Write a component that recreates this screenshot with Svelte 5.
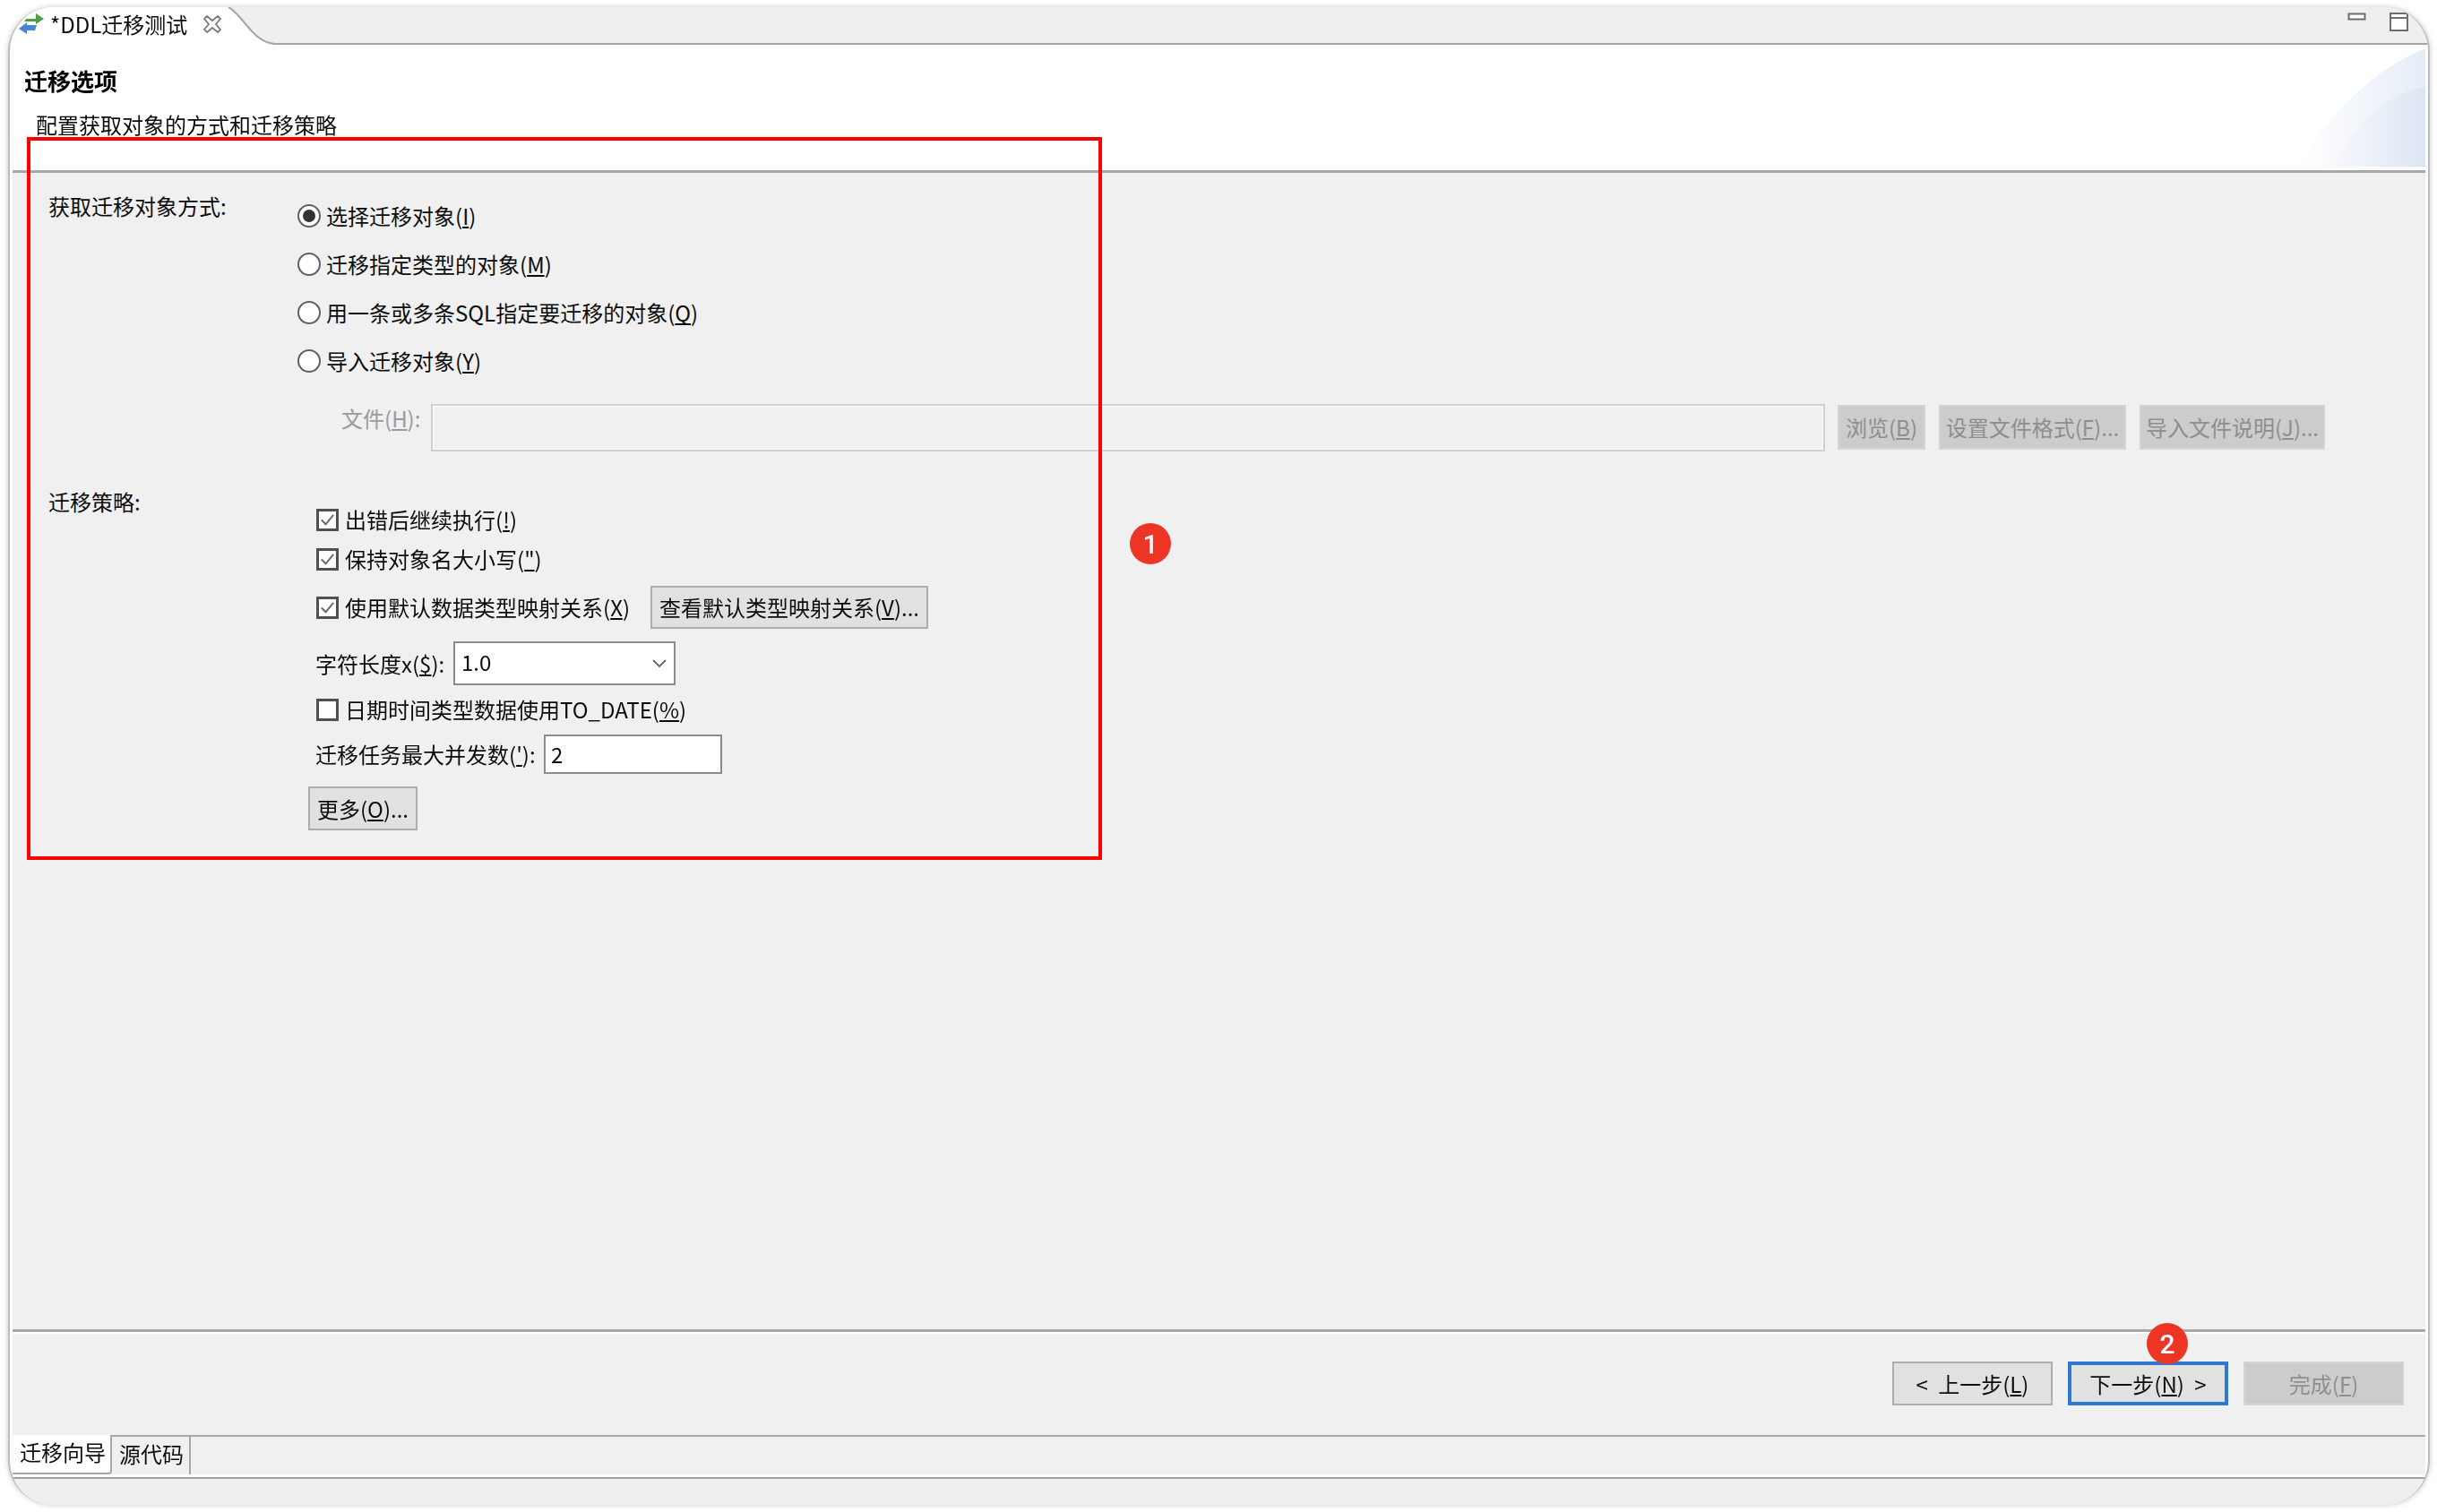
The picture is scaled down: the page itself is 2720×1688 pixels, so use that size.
<script>
  const radios = [
    { text: '选择迁移对象', key: 'I', checked: true },
    { text: '迁移指定类型的对象', key: 'M' },
    { text: '用一条或多条SQL指定要迁移的对象', key: 'Q' },
    { text: '导入迁移对象', key: 'Y' }
  ];
</script>

<div class="page">
  <div class="window">
    <div class="tabbar">
      <div class="tab">
        <svg class="swap" width="30" height="26" viewBox="0 0 30 26">
          <path d="M9 8h11V2l9 6-9 6v-3H7z" fill="#4f9e45" />
          <path d="M21 15H10v-3l-9 7 9 6v-4h9z" fill="#4a86d0" />
        </svg>
        <span class="tabtitle">*DDL迁移测试</span>
        <svg class="close" width="22" height="22" viewBox="0 0 22 22">
          <path d="M2 5l3-3 6 5 6-5 3 3-5 6 5 6-3 3-6-5-6 5-3-3 5-6z" fill="#fff" stroke="#7c7c7c" stroke-width="1.8" />
        </svg>
      </div>
      <svg class="curve" width="62" height="42" viewBox="0 0 62 42">
        <path d="M0 0H6C22 8 32 39 58 41H62V42H0Z" fill="#fff" />
        <path d="M6 0C22 8 32 39 58 41H62" fill="none" stroke="#a4a4a4" stroke-width="2" />
      </svg>
      <div class="barfill">
        <svg class="minimize" width="22" height="10" viewBox="0 0 22 10"><rect x="1.5" y="1.5" width="18" height="6" fill="#fff" stroke="#6e6e6e" stroke-width="2" /></svg>
        <svg class="maximize" width="22" height="22" viewBox="0 0 22 22"><rect x="1" y="1" width="19" height="19" fill="#fff" stroke="#6e6e6e" stroke-width="2" /><path d="M1 6h19" stroke="#6e6e6e" stroke-width="2" /></svg>
      </div>
    </div>

    <header class="header">
      <h1>迁移选项</h1>
      <p>配置获取对象的方式和迁移策略</p>
      <svg class="corner" width="142" height="132" viewBox="0 0 142 132" preserveAspectRatio="none">
        <defs>
          <linearGradient id="g1" x1="0" x2="1" y1="0" y2="0">
            <stop offset="0" stop-color="#fff" />
            <stop offset="1" stop-color="#e6edf7" />
          </linearGradient>
          <linearGradient id="g2" x1="0" x2="1" y1="0" y2="0">
            <stop offset="0" stop-color="#f6f8fc" />
            <stop offset="1" stop-color="#dce6f3" />
          </linearGradient>
        </defs>
        <path d="M0 132C30 80 80 25 142 0V132Z" fill="url(#g1)" />
        <path d="M40 132C60 85 100 50 142 43V132Z" fill="url(#g2)" />
      </svg>
    </header>

    <main class="main">
      <section class="acquire">
        <div class="seclabel first">获取迁移对象方式:</div>
        <div class="radios">
          {#each radios as r}
            <label class="radio">
              <span class="dot" class:on={r.checked}></span>
              <span>{r.text}(<u>{r.key}</u>)</span>
            </label>
          {/each}
        </div>
      </section>

      <div class="filerow">
        <span class="filelabel">文件(<u>H</u>):</span>
        <div class="fileinput"></div>
        <button class="btn disabled browse">浏览(<u>B</u>)</button>
        <button class="btn disabled fmt">设置文件格式(<u>F</u>)...</button>
        <button class="btn disabled doc">导入文件说明(<u>J</u>)...</button>
      </div>

      <section class="strategy">
        <div class="seclabel second">迁移策略:</div>
        <div class="options">
          <div class="opt h44"><span class="box"><svg width="21" height="21" viewBox="0 0 20 20"><path d="M3 10l5 5 9-11" fill="none" stroke="#666" stroke-width="2" /></svg></span>出错后继续执行(<u>!</u>)</div>
          <div class="opt h44"><span class="box"><svg width="21" height="21" viewBox="0 0 20 20"><path d="M3 10l5 5 9-11" fill="none" stroke="#666" stroke-width="2" /></svg></span>保持对象名大小写(<u>"</u>)</div>
          <div class="opt maprow">
            <span class="box"><svg width="21" height="21" viewBox="0 0 20 20"><path d="M3 10l5 5 9-11" fill="none" stroke="#666" stroke-width="2" /></svg></span>
            <span>使用默认数据类型映射关系(<u>X</u>)</span>
            <button class="btn viewmap">查看默认类型映射关系(<u>V</u>)...</button>
          </div>
          <div class="opt comborow">
            <span class="plain lenlabel">字符长度x(<u>$</u>):</span>
            <div class="combo">
              <span>1.0</span>
              <svg width="16" height="10" viewBox="0 0 16 10"><path d="M1 1l7 7 7-7" fill="none" stroke="#666" stroke-width="1.8" /></svg>
            </div>
          </div>
          <div class="opt h44 daterow"><span class="box"></span>日期时间类型数据使用TO_DATE(<u>%</u>)</div>
          <div class="opt maxrow">
            <span class="plain maxlabel">迁移任务最大并发数(<u>'</u>):</span>
            <div class="numinput">2</div>
          </div>
          <button class="btn more">更多(<u>O</u>)...</button>
        </div>
      </section>
    </main>

    <div class="navzone">
      <button class="btn nav spaced">&lt; 上一步(<u>L</u>)</button>
      <button class="btn nav focus spaced">下一步(<u>N</u>) &gt;</button>
      <button class="btn nav disabled">完成(<u>F</u>)</button>
    </div>

    <nav class="tabs">
      <div class="t active">迁移向导</div>
      <div class="t src">源代码</div>
    </nav>
    <div class="status"></div>
  </div>

  <div class="redbox"></div>
  <div class="badge one">1</div>
  <div class="badge two">2</div>
</div>

<style>
  :global(body) { margin: 0; background: #fff; }
  .page {
    position: relative;
    width: 2720px;
    height: 1688px;
    padding: 8px 8px 8px 9px;
    box-sizing: border-box;
    overflow: hidden;
    font-family: "Noto Sans CJK SC", "Liberation Sans", sans-serif;
    font-size: 24px;
    color: #0c0c0c;
  }
  .window {
    height: 1672px;
    box-sizing: border-box;
    border-left: 2px solid #bdbdbd;
    border-right: 2px solid #bdbdbd;
    border-radius: 50px;
    overflow: hidden;
    background: #fff;
    box-shadow: 0 0 6px rgba(0, 0, 0, 0.22);
    display: flex;
    flex-direction: column;
    filter: blur(0.45px);
    line-height: 30px;
  }
  u { text-underline-offset: 2px; text-decoration-thickness: 1.5px; text-decoration-skip-ink: none; }

  .tabbar { height: 42px; display: flex; flex: none; background: #efefef; }
  .tab {
    width: 238px;
    background: #fff;
    display: flex;
    align-items: center;
    padding-left: 9px;
    box-sizing: border-box;
    position: relative;
  }
  .swap { flex: none; margin-top: -6px; }
  .tabtitle { margin-left: 6px; margin-top: -4px; white-space: nowrap; }
  .close { margin-left: 17px; margin-top: -4px; flex: none; }
  .curve { flex: none; }
  .barfill {
    flex: 1;
    border-bottom: 2px solid #a4a4a4;
    box-sizing: border-box;
    display: flex;
    justify-content: flex-end;
    align-items: flex-start;
    padding: 6px 21px 0 0;
    gap: 25px;
  }

  .header {
    height: 140px;
    flex: none;
    margin: 0 3px 0 3px;
    position: relative;
    border-bottom: 3px solid #a8a8a8;
    box-sizing: content-box;
  }
  .header h1 { margin: 0; padding: 25px 0 0 13px; font-size: 26px; line-height: 30px; font-weight: 700; color: #000; }
  .header p { margin: 0; padding: 20px 0 0 26px; line-height: 30px; margin-top: -1px; }
  .corner { position: absolute; right: 0; top: 4px; }

  .main { flex: 1; min-height: 0; background: #f0f0f0; margin: 0 3px; }
  .acquire { display: flex; padding-top: 21px; }
  .seclabel { width: 318px; padding-left: 40px; box-sizing: border-box; flex: none; }
  .first { margin-top: 1px; }
  .radios { display: flex; flex-direction: column; }
  .radio { height: 54px; display: flex; align-items: center; gap: 6px; white-space: nowrap; }
  .dot {
    width: 26px; height: 26px; box-sizing: border-box; border-radius: 50%;
    border: 2px solid #606060; background: #fff; display: block; position: relative; flex: none;
  }
  .dot.on::after {
    content: ""; position: absolute; inset: 4px; border-radius: 50%; background: #333;
  }

  .filerow { display: flex; margin-top: 20px; height: 54px; align-items: center; padding-left: 367px; }
  .filelabel { color: #9a9a9a; width: 100px; flex: none; margin-top: -21px; }
  .fileinput { width: 1556px; height: 53px; flex: none; box-sizing: border-box; border: 2px solid #cfcfcf; box-shadow: inset 0 0 0 1px #fff; background: #f0f0f0; }
  .btn {
    font: inherit;
    line-height: 30px;
    color: inherit;
    padding: 0;
    margin: 0;
    box-sizing: border-box;
    background: #e1e1e1;
    border: 2px solid #adadad;
    border-radius: 0;
    white-space: nowrap;
  }
  .btn.disabled { background: #cccccc; border-color: #d4d4d4; color: #8e8e8e; }
  .browse { width: 98px; height: 50px; margin-left: 14px; }
  .fmt { width: 209px; height: 50px; margin-left: 15px; }
  .doc { width: 207px; height: 50px; margin-left: 15px; }

  .strategy { display: flex; margin-top: 43px; }
  .second { width: 330px; margin-top: -2px; }
  .options { display: flex; flex-direction: column; align-items: flex-start; margin-left: 8px; margin-top: 11px; }
  .opt { display: flex; align-items: center; white-space: nowrap; }
  .h44 { height: 44px; }
  .box {
    width: 25px; height: 25px; box-sizing: border-box; flex: none;
    border: 3px solid #505050; background: #fff; margin: 0 7px 0 1px;
    display: flex; align-items: center; justify-content: center;
  }
  .maprow { height: 48px; margin-top: 8px; }
  .viewmap { width: 310px; height: 48px; margin-left: 23px; }
  .comborow { height: 49px; margin-top: 14px; }
  .plain { flex: none; }
  .lenlabel { width: 154px; }
  .maxlabel { width: 255px; }
  .combo {
    width: 248px; height: 49px; box-sizing: border-box; border: 2px solid #8c8c8c; background: #fff;
    display: flex; align-items: center; justify-content: space-between;
    padding: 0 8px 0 7px;
  }
  .combo span { margin-top: -4px; }
  .daterow { margin-top: 5px; }
  .maxrow { height: 44px; margin-top: 6px; }
  .numinput {
    width: 199px; height: 44px; box-sizing: border-box; border: 2px solid #8c8c8c; background: #fff;
    padding-left: 6px; display: flex; align-items: center;
  }
  .more { width: 122px; height: 49px; margin-top: 14px; margin-left: -8px; }

  .navzone {
    flex: none;
    height: 118px;
    margin: 0 3px;
    box-sizing: border-box;
    background: #f0f0f0;
    border-top: 3px solid #a8a8a8;
    box-shadow: inset 0 2px 0 #fff;
    display: flex;
    justify-content: flex-end;
    align-items: flex-start;
    padding: 33px 24px 0 0;
    gap: 17px;
  }
  .nav { width: 179px; height: 49px; }
  .nav.focus { border: 4px solid #2f78d0; }
  .spaced { word-spacing: 6px; }

  .tabs {
    flex: none;
    height: 47px;
    margin: 0 3px;
    display: flex;
    box-sizing: border-box;
    border-top: 2px solid #a8a8a8;
    border-bottom: 3px solid #fff;
    background: #f0f0f0;
  }
  .t { height: 42px; box-sizing: border-box; display: flex; align-items: center; white-space: nowrap; padding-bottom: 4px; }
  .active {
    width: 111px; background: #fff; padding-left: 8px; margin-top: -2px; height: 44px;
    border-right: 2px solid #a8a8a8; border-bottom: 2px solid #a8a8a8; border-bottom-right-radius: 4px;
  }
  .src { width: 88px; padding-left: 8px; border-right: 2px solid #a8a8a8; }
  .status { flex: none; height: 31px; box-sizing: border-box; background: #efefef; border-top: 2px solid #a0a0a0; }

  .redbox {
    position: absolute;
    left: 30px; top: 153px;
    width: 1200px; height: 807px;
    box-sizing: border-box;
    border: 4px solid #f00;
  }
  .badge {
    position: absolute;
    background: #ec3524;
    color: #fff;
    border-radius: 50%;
    display: flex;
    align-items: center;
    justify-content: center;
    font-family: Roboto, "Liberation Sans", sans-serif;
    font-weight: 500;
    font-size: 30px;
    width: 46px;
    height: 46px;
  }
  .one { left: 1261px; top: 584px; }
  .two { left: 2396px; top: 1477px; }
</style>
